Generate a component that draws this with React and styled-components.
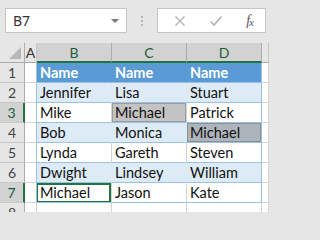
import React from 'react';
import styled, { createGlobalStyle } from 'styled-components';

const GlobalStyle = createGlobalStyle`
  html, body {
    margin: 0;
    padding: 0;
    background: #e6e6e6;
    overflow: hidden;
  }
  * {
    box-sizing: border-box;
  }
`;

const green = '#217346';
const tableLine = '#9bc2e6';
const gridLine = '#d4d4d4';

const Page = styled.div`
  width: 269px;
  height: 212px;
  overflow: hidden;
  background: #e6e6e6;
  font-family: Lato, 'Liberation Sans', sans-serif;
`;

const Toolbar = styled.div`
  display: flex;
  align-items: center;
  height: 43px;
  padding: 8px 3px 10px 5px;
`;

const NameBox = styled.div`
  display: flex;
  align-items: center;
  justify-content: space-between;
  width: 122px;
  height: 25px;
  padding: 0 7px 0 7px;
  background: #fff;
  border: 1px solid #c6c6c6;
  font-family: 'Noto Sans', 'Open Sans', sans-serif;
  font-size: 14px;
  color: #333;
`;

const Caret = styled.span`
  width: 0;
  height: 0;
  border-left: 4px solid transparent;
  border-right: 4px solid transparent;
  border-top: 4px solid #777;
`;

const Dots = styled.div`
  display: flex;
  flex-direction: column;
  gap: 2px;
  margin: 0 14px 0 14px;
  span {
    width: 2px;
    height: 2px;
    background: #b5b5b5;
  }
`;

const FormulaBox = styled.div`
  display: flex;
  align-items: center;
  justify-content: space-between;
  width: 109px;
  height: 25px;
  padding: 0 12px 0 16px;
  background: #fff;
  border: 1px solid #c6c6c6;
`;

const Fx = styled.span`
  font-family: 'Liberation Serif', serif;
  font-style: italic;
  font-size: 14px;
  color: #555;
  letter-spacing: -1px;
  sub {
    font-size: 11px;
    vertical-align: -1px;
  }
`;

const Sheet = styled.div`
  display: grid;
  grid-template-columns: 25px 12px 75px 75px 75px 1fr;
  grid-auto-rows: 20px;
  background: #fff;
`;

const Corner = styled.div`
  position: relative;
  background: #e6e6e6;
  border-right: 1px solid #ababab;
  border-bottom: 1px solid #ababab;
  &::after {
    content: '';
    position: absolute;
    right: 3px;
    bottom: 3px;
    width: 0;
    height: 0;
    border-left: 12px solid transparent;
    border-bottom: 12px solid #b7b7b7;
  }
`;

const ColHead = styled.div`
  display: flex;
  align-items: center;
  justify-content: center;
  font-family: Lato, 'Liberation Sans', sans-serif;
  font-size: 14px;
  background: ${(p) => (p.$selected ? '#d2d2d2' : '#e6e6e6')};
  color: ${(p) => (p.$selected ? '#1d5e3a' : '#333')};
  border-right: 1px solid ${(p) => (p.$selected ? '#ababab' : '#c6c6c6')};
  border-bottom: ${(p) => (p.$selected ? `2px solid ${green}` : '1px solid #ababab')};
`;

const RowHead = styled.div`
  display: flex;
  align-items: center;
  justify-content: center;
  font-size: 14px;
  background: ${(p) => (p.$selected ? '#d2d2d2' : '#e6e6e6')};
  color: ${(p) => (p.$selected ? '#1d5e3a' : '#444')};
  border-bottom: 1px solid #c8c8c8;
  border-right: ${(p) => (p.$selected ? `2px solid ${green}` : '1px solid #ababab')};
  padding-bottom: 1px;
`;

const fills = {
  head: '#5b9bd5',
  band: '#ddebf7',
  plain: '#ffffff',
};

const marks = {
  light: { bg: '#c3c3c3', line: '#9c9c9c' },
  dark: { bg: '#adb4bb', line: '#8b9096' },
};

const Cell = styled.div`
  position: relative;
  display: flex;
  align-items: center;
  padding: 0 0 1px 3px;
  font-size: 14.5px;
  white-space: nowrap;
  overflow: hidden;
  color: ${(p) => (p.$fill === 'head' ? '#fff' : '#111')};
  font-weight: ${(p) => (p.$fill === 'head' ? 700 : 400)};
  background: ${(p) => (p.$mark ? marks[p.$mark].bg : fills[p.$fill])};
  box-shadow: ${(p) => (p.$mark ? `inset 0 0 0 1px ${marks[p.$mark].line}` : 'none')};
  border-bottom: 1px solid ${tableLine};
  border-right: 1px solid
    ${(p) => (p.$last ? tableLine : p.$fill === 'plain' ? gridLine : 'transparent')};
`;

const Blank = styled.div`
  border-bottom: 1px solid ${gridLine};
  border-right: 1px solid ${(p) => (p.$edge ? tableLine : gridLine)};
`;

const Active = styled.span`
  position: absolute;
  inset: 0 0 -1px -1px;
  border: 2px solid ${green};
  pointer-events: none;
`;

const rows = [
  ['Name', 'Name', 'Name'],
  ['Jennifer', 'Lisa', 'Stuart'],
  ['Mike', 'Michael', 'Patrick'],
  ['Bob', 'Monica', 'Michael'],
  ['Lynda', 'Gareth', 'Steven'],
  ['Dwight', 'Lindsey', 'William'],
  ['Michael', 'Jason', 'Kate'],
];

const markAt = { '2-1': 'light', '3-2': 'dark' };
const selectedRows = [2, 6];

const CloseIcon = () => (
  <svg width="12" height="12" viewBox="0 0 12 12">
    <path d="M1.5 1.5 L10.5 10.5 M10.5 1.5 L1.5 10.5" stroke="#b3b3b3" strokeWidth="1.4" fill="none" />
  </svg>
);

const CheckIcon = () => (
  <svg width="14" height="12" viewBox="0 0 14 12">
    <path d="M1.5 6.5 L5 10 L12.5 1.5" stroke="#b3b3b3" strokeWidth="1.6" fill="none" />
  </svg>
);

export default function App() {
  return (
    <Page>
      <GlobalStyle />
      <Toolbar>
        <NameBox>
          B7
          <Caret />
        </NameBox>
        <Dots>
          <span />
          <span />
          <span />
        </Dots>
        <FormulaBox>
          <CloseIcon />
          <CheckIcon />
          <Fx>
            f<sub>x</sub>
          </Fx>
        </FormulaBox>
      </Toolbar>
      <Sheet>
        <Corner />
        <ColHead>A</ColHead>
        <ColHead $selected>B</ColHead>
        <ColHead $selected>C</ColHead>
        <ColHead $selected>D</ColHead>
        <ColHead />
        {rows.map((row, r) => {
          const fill = r === 0 ? 'head' : r % 2 === 1 ? 'band' : 'plain';
          return (
            <React.Fragment key={r}>
              <RowHead $selected={selectedRows.includes(r)}>{r + 1}</RowHead>
              <Blank $edge />
              {row.map((name, c) => (
                <Cell key={c} $fill={fill} $mark={markAt[`${r}-${c}`]} $last={c === 2}>
                  {name}
                  {r === 6 && c === 0 && <Active />}
                </Cell>
              ))}
              <Blank />
            </React.Fragment>
          );
        })}
        <RowHead>8</RowHead>
        <Blank />
        <Blank />
        <Blank />
        <Blank />
        <Blank />
      </Sheet>
    </Page>
  );
}
